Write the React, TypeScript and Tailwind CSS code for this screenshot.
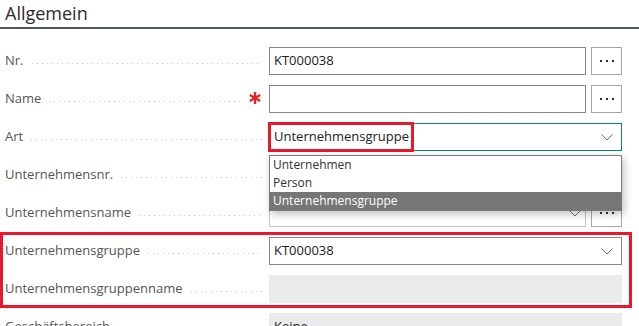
import React from "react";

const Leader = () => (
  <div className="ml-[8px] h-px flex-1 translate-y-[2px] bg-[repeating-linear-gradient(to_right,#c8c6c4_0_1px,transparent_1px_5px)]" />
);

const Asterisk = () => (
  <svg width="14" height="14" viewBox="0 0 14 14" className="ml-[7px] -translate-y-[1px]">
    <g stroke="#e2262c" strokeWidth="2.4" strokeLinecap="butt">
      <line x1="7" y1="1" x2="7" y2="13" />
      <line x1="1.8" y1="4" x2="12.2" y2="10" />
      <line x1="1.8" y1="10" x2="12.2" y2="4" />
    </g>
  </svg>
);

const Chevron = () => (
  <svg width="12" height="7" viewBox="0 0 12 7" className="shrink-0">
    <polyline points="0.5,0.5 6,6 11.5,0.5" fill="none" stroke="#6e6c6a" strokeWidth="1" />
  </svg>
);

const Dots = () => (
  <div className="flex h-[28px] w-[31px] items-center justify-center gap-[4px] border border-[#a6a6a6] bg-white">
    <span className="h-[2px] w-[2px] bg-[#2b2b3b]" />
    <span className="h-[2px] w-[2px] bg-[#2b2b3b]" />
    <span className="h-[2px] w-[2px] bg-[#2b2b3b]" />
  </div>
);

function Row({
  label,
  required,
  children,
}: {
  label: string;
  required?: boolean;
  children?: React.ReactNode;
}) {
  return (
    <div className="flex h-[38px] items-center">
      <div className="flex w-[269px] shrink-0 items-center pl-[5px] pr-[7px]">
        <span className="whitespace-nowrap text-[13px] text-[#555555]">{label}</span>
        <Leader />
        {required && <Asterisk />}
      </div>
      {children}
    </div>
  );
}

export default function App() {
  return (
    <div className="h-[326px] w-[639px] overflow-hidden bg-white font-['Open_Sans',sans-serif]">
      <div className="border-b-2 border-[#4f5867] pb-[2px] pl-[5px] pt-px">
        <h2 className="text-[18px] leading-[24px] text-[#2b2b2b]">Allgemein</h2>
      </div>

      <div className="mt-[13px]">
        <Row label="Nr.">
          <div className="flex gap-[5px]">
            <div className="flex h-[28px] w-[317px] items-center border border-[#8a8886] px-[4px] text-[13px] text-[#212121]">
              KT000038
            </div>
            <Dots />
          </div>
        </Row>

        <Row label="Name" required>
          <div className="flex gap-[5px]">
            <div className="h-[28px] w-[317px] border border-[#8a8886]" />
            <Dots />
          </div>
        </Row>

        <div className="relative">
          <Row label="Art">
            <div className="flex h-[28px] w-[353px] items-center justify-between border border-[#0f7f80] pl-[4px] pr-[8px] text-[13px] text-[#212121]">
              <span>Unternehmensgruppe</span>
              <Chevron />
            </div>
          </Row>
          <div className="pointer-events-none absolute left-[268px] top-[4px] h-[30px] w-[146px] border-[3px] border-[#e8192c]" />
          <div className="absolute left-[269px] top-[37px] z-10 w-[353px] border border-[#7a7a7a] bg-white text-[12px] shadow-[2px_3px_8px_rgba(0,0,0,0.25)]">
            <div className="flex h-[18px] items-center px-[3px] text-[#323130]">Unternehmen</div>
            <div className="flex h-[18px] items-center px-[3px] text-[#323130]">Person</div>
            <div className="flex h-[18px] items-center bg-[#767676] px-[3px] text-white">Unternehmensgruppe</div>
          </div>
        </div>

        <Row label="Unternehmensnr.">
          <div className="flex gap-[5px]">
            <div className="h-[28px] w-[317px] border border-[#c2c2c2]" />
            <Dots />
          </div>
        </Row>

        <Row label="Unternehmensname">
          <div className="flex gap-[5px]">
            <div className="flex h-[28px] w-[317px] items-center justify-end border border-[#c2c2c2] pr-[4px]">
              <Chevron />
            </div>
            <Dots />
          </div>
        </Row>

        <div className="relative">
          <Row label="Unternehmensgruppe">
            <div className="flex h-[28px] w-[353px] items-center justify-between border border-[#8a8886] pl-[4px] pr-[8px] text-[13px] text-[#212121]">
              <span>KT000038</span>
              <Chevron />
            </div>
          </Row>
          <Row label="Unternehmensgruppenname">
            <div className="h-[28px] w-[353px] bg-[#eaebec]" />
          </Row>
          <div className="pointer-events-none absolute inset-y-0 left-0 w-[632px] border-[3px] border-[#e8192c]" />
        </div>

        <Row label="Geschäftsbereich">
          <div className="flex h-[28px] w-[353px] items-center bg-[#eaebec] px-[5px] text-[13px] text-[#212121]">
            Keine
          </div>
        </Row>
      </div>
    </div>
  );
}
